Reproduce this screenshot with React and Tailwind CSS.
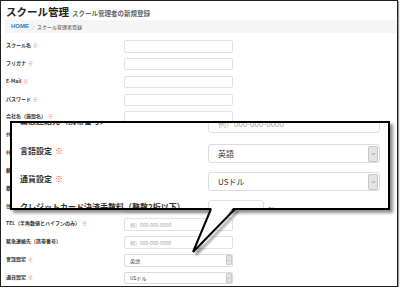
import React from "react";

const JP = '"Noto Sans CJK JP", "Noto Sans", "Liberation Sans", sans-serif';

const ROWS = [
  { label: "スクール名", req: true },
  { label: "フリガナ", req: true },
  { label: "E-Mail", req: true },
  { label: "パスワード", req: true },
  { label: "会社名（施設名）", req: true },
  { label: "代表者名", req: true },
  { label: "代表者名フリガナ", req: true },
  { label: "郵便番号", req: true },
  { label: "都道府県", req: true },
  { label: "住所", req: true },
  { label: "TEL（半角数値とハイフンのみ）", req: true, ph: "例）000-000-0000" },
  { label: "緊急連絡先（携帯番号）", ph: "例）000-000-0000" },
  { label: "言語設定", req: true, select: "英語" },
  { label: "通貨設定", req: true, select: "USドル" },
];

const ZOOM_ROWS = [
  { label: "緊急連絡先（携帯番号）", ph: "例）000-000-0000", first: true },
  { label: "言語設定", req: true, select: "英語" },
  { label: "通貨設定", req: true, select: "USドル" },
  { label: "クレジットカード決済手数料（整数2桁以下）", percent: true },
];

function Chevron() {
  return (
    <svg width="5" height="4" viewBox="0 0 5 4">
      <polyline points="0.8,1 2.5,2.8 4.2,1" fill="none" stroke="#888" strokeWidth="0.8" />
    </svg>
  );
}

function SmallRow({ r }) {
  return (
    <div className="flex h-[17.85px] items-start">
      <div className="w-[123px] pl-[5px] pt-[1px] text-[5px] leading-[8px] font-bold text-[#333] whitespace-nowrap">
        {r.label}
        {r.req && <span className="ml-[2px] text-[#f26b6b]">※</span>}
      </div>
      {r.select ? (
        <div className="flex h-[12.5px] w-[109px] items-center rounded-[2px] border border-[#dcdcdc] bg-white pl-[5px]">
          <span className="flex-1 text-[5px] text-[#333]">{r.select}</span>
          <span className="mr-[0.5px] flex h-[10px] w-[5.5px] items-center justify-center rounded-[1px] border border-[#c8c8c8] bg-[#e2e2e2]">
            <svg width="3" height="3" viewBox="0 0 5 4">
              <polyline points="0.8,1 2.5,2.8 4.2,1" fill="none" stroke="#888" strokeWidth="0.9" />
            </svg>
          </span>
        </div>
      ) : (
        <div className="flex h-[12.5px] w-[109px] items-center rounded-[2px] border border-[#e2e2e2] bg-white pl-[5px] text-[5px] text-[#aaa]">
          {r.ph}
        </div>
      )}
    </div>
  );
}

function BigRow({ r }) {
  return (
    <div className={`flex items-start ${r.first ? "h-[30px]" : "h-[28px]"}`}>
      <div className="w-[196px] pl-[8px] pt-[1px] text-[8px] leading-[12px] font-bold text-[#333] whitespace-nowrap">
        {r.label}
        {r.req && <span className="ml-[3px] text-[#ee3f3f]">※</span>}
      </div>
      {r.select && (
        <div className="flex h-[19px] w-[172px] items-center rounded-[3px] border border-[#dcdcdc] bg-white pl-[9px]">
          <span className="flex-1 text-[8px] text-[#333]">{r.select}</span>
          <span className="mr-[1px] flex h-[16px] w-[10px] items-center justify-center rounded-[2px] border border-[#c6c6c6] bg-[#e4e4e4]">
            <Chevron />
          </span>
        </div>
      )}
      {r.ph && (
        <div className="flex h-[19px] w-[172px] items-center rounded-[3px] border border-[#e0e0e0] bg-white pl-[9px] text-[8px] text-[#aaa]">
          {r.ph}
        </div>
      )}
      {r.percent && (
        <div className="flex items-start">
          <div className="h-[19px] w-[56px] rounded-[3px] border border-[#e0e0e0] bg-white" />
          <span className="ml-[4px] pt-[4px] text-[8px] text-[#555]">%</span>
        </div>
      )}
    </div>
  );
}

export default function App() {
  return (
    <div className="relative h-[287px] w-[398px] overflow-hidden border border-[#222] bg-white shadow-[1px_1px_1px_#999]" style={{ fontFamily: JP }}>
      {/* header */}
      <div className="flex items-baseline pl-[5px] pt-[3px]">
        <h1 className="text-[10.5px] font-bold leading-[15px] text-[#222]">スクール管理</h1>
        <span className="ml-[3px] text-[6.5px] font-semibold text-[#666]">スクール管理者の新規登録</span>
      </div>
      <div className="ml-[4px] mt-[1px] flex h-[13px] items-center bg-[#f5f5f5] pl-[6px]">
        <span className="text-[6px] font-semibold text-[#337ab7]" style={{ fontFamily: '"Liberation Sans", sans-serif' }}>HOME</span>
        <span className="mx-[3px] text-[5px] text-[#bbb]">/</span>
        <span className="text-[5px] text-[#444]">スクール管理者登録</span>
      </div>

      {/* form */}
      <div className="mt-[7px]">
        {ROWS.map((r) => (
          <SmallRow key={r.label} r={r} />
        ))}
      </div>

      {/* zoom callout */}
      <div className="absolute left-[9px] top-[120px] h-[89px] w-[380px] overflow-hidden border-2 border-black bg-white shadow-[3px_3px_3px_rgba(0,0,0,0.45)]">
        <div className="-mt-[9px]">
          {ZOOM_ROWS.map((r) => (
            <BigRow key={r.label} r={r} />
          ))}
        </div>
      </div>
      <svg className="pointer-events-none absolute left-[-1px] top-[-1px]" width="400" height="288">
        <defs>
          <filter id="sh" x="-50%" y="-50%" width="200%" height="200%">
            <feGaussianBlur stdDeviation="1.2" />
          </filter>
        </defs>
        <polyline points="215,210 196,255 238,211" fill="none" stroke="rgba(0,0,0,0.4)" strokeWidth="2.5" filter="url(#sh)" />
        <polygon points="212,207 193,252 234,207" fill="white" />
        <polyline points="211,209 193,252 235,209" fill="none" stroke="black" strokeWidth="2" />
      </svg>
    </div>
  );
}
